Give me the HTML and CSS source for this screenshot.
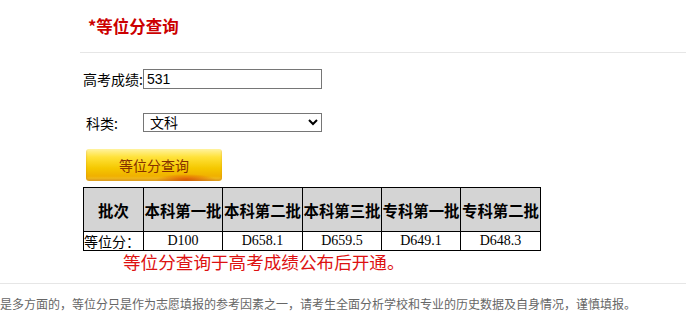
FILE: index.html
```html
<!DOCTYPE html>
<html lang="zh-CN">
<head>
    <meta charset="UTF-8">
    <meta name="viewport" content="width=device-width, initial-scale=1.0">
    <title>等位分查询</title>
    <link rel="stylesheet" href="styles.css">
</head>
<body>
    <div class="panel">
        <h2 class="title">*等位分查询</h2>

        <div class="form-row row-score">
            <label class="label" for="score">高考成绩:</label>
            <input class="field" id="score" type="text" value="531">
        </div>

        <div class="form-row row-type">
            <label class="label label-type" for="type">科类:</label>
            <select class="field" id="type">
                <option>文科</option>
                <option>理科</option>
            </select>
        </div>

        <button class="btn-query">等位分查询</button>

        <table class="result">
            <colgroup>
                <col class="c0"><col class="c1"><col class="c2"><col class="c3"><col class="c4"><col class="c5">
            </colgroup>
            <tr class="head">
                <th>批次</th>
                <th>本科第一批</th>
                <th>本科第二批</th>
                <th>本科第三批</th>
                <th>专科第一批</th>
                <th>专科第二批</th>
            </tr>
            <tr class="data">
                <td class="first">等位分：</td>
                <td>D100</td>
                <td>D658.1</td>
                <td>D659.5</td>
                <td>D649.1</td>
                <td>D648.3</td>
            </tr>
        </table>

        <p class="note">等位分查询于高考成绩公布后开通。</p>
    </div>

    <div class="footer">
        <p>是多方面的，等位分只是作为志愿填报的参考因素之一，请考生全面分析学校和专业的历史数据及自身情况，谨慎填报。</p>
    </div>
</body>
</html>
```

FILE: styles.css
```css
html, body {
    margin: 0;
    padding: 0;
    background: #fff;
    overflow: hidden;
}
body {
    font-family: "Noto Sans CJK SC", "Liberation Sans", sans-serif;
    font-size: 14px;
    color: #000;
}
.panel {
    margin-left: 80px;
}
.title {
    margin: 0;
    padding: 14px 0 14px 8px;
    line-height: 24px;
    font-size: 16.5px;
    font-weight: bold;
    color: #cc0000;
    border-bottom: 1px solid #e6e6e6;
}
.form-row {
    display: flex;
    align-items: center;
    padding-left: 3px;
    height: 20px;
}
.row-score { margin-top: 16px; }
.row-type { margin-top: 24px; height: 19px; }
.label {
    width: 60px;
    line-height: 20px;
    white-space: nowrap;
}
.label-type { padding-left: 3px; width: 57px; }
.field {
    box-sizing: border-box;
    width: 179px;
    height: 20px;
    margin: 0;
    padding: 0 3px;
    border: 1px solid #767676;
    border-radius: 0;
    background: #fff;
    font-family: "Liberation Sans", "Noto Sans CJK SC", sans-serif;
    font-size: 14px;
    color: #000;
    outline: none;
}
select.field {
    height: 19px;
    padding: 0 2px;
    font-size: 14px;
    line-height: normal;
}
.btn-query {
    display: block;
    margin: 17px 0 0 6px;
    width: 136px;
    height: 32px;
    padding: 0;
    border: none;
    border-radius: 3px;
    background:
        radial-gradient(ellipse 30px 6px at 100px 31px, rgba(220, 60, 0, 0.85), rgba(220, 60, 0, 0) 100%),
        linear-gradient(to bottom, #fff3a0 0%, #ffe23a 25%, #f5c800 60%, #f0b000 85%, #f6d040 100%);
    box-shadow: inset 0 -2px 2px rgba(200, 110, 0, 0.5);
    font-family: "Noto Sans CJK SC", sans-serif;
    font-size: 14px;
    color: #863000;
    cursor: pointer;
}
.result {
    margin: 6px 0 0 3px;
    border-collapse: collapse;
    table-layout: fixed;
    width: 458px;
    border: 1px solid #000;
}
.c0 { width: 60px; }
.c1 { width: 79px; }
.c2 { width: 80px; }
.c3 { width: 79px; }
.c4 { width: 79px; }
.c5 { width: 80px; }
.result th, .result td {
    border: 1px solid #000;
    padding: 0;
    text-align: center;
    white-space: nowrap;
}
.head th {
    height: 43px;
    background: #d4d4d4;
    font-size: 15.4px;
    font-weight: bold;
}
.data td {
    height: 18px;
    line-height: 18px;
    font-family: "Liberation Serif", serif;
    font-size: 14px;
}
.data td.first {
    text-align: left;
    font-family: "Noto Sans CJK SC", sans-serif;
}
.note {
    margin: 1px 0 0 43px;
    font-size: 17.6px;
    line-height: 20px;
    color: #dd1111;
}
.footer {
    margin-top: 11px;
    border-top: 1px solid #e6e6e6;
}
.footer p {
    margin: 0;
    padding-top: 12px;
    font-size: 12px;
    line-height: 16px;
    color: #666;
    white-space: nowrap;
}
```
